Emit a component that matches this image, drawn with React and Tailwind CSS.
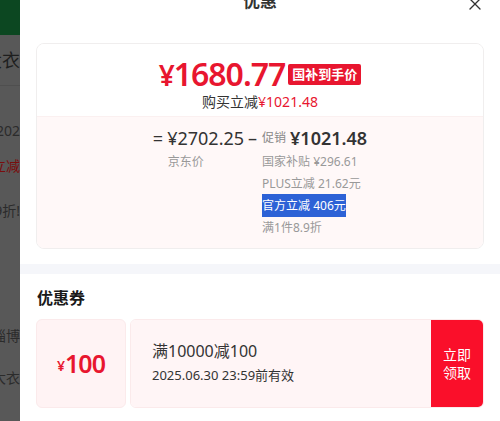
import { X } from "lucide-react";

const font = "font-['Noto_Sans','Noto_Sans_CJK_SC',sans-serif]";

function BackdropStrip() {
  return (
    <div className="w-[20px] shrink-0 overflow-hidden bg-[#585858] flex flex-col">
      <div className="h-[35px] shrink-0 bg-[#0c4721]" />
      <div className="h-[50px] flex justify-end items-center">
        <span className="shrink-0 whitespace-nowrap text-[18px] text-[#1e1e1e]">大衣</span>
      </div>
      <div className="h-[30px] border-t border-[#4f4f4f]" />
      <div className="h-[30px] flex justify-end items-center">
        <span className="shrink-0 whitespace-nowrap text-[14px] text-[#2b2b2b]">202</span>
      </div>
      <div className="h-[40px] flex justify-end items-center">
        <span className="shrink-0 whitespace-nowrap text-[14px] text-[#7a0d0d]">立减</span>
      </div>
      <div className="h-[50px] flex justify-end items-center">
        <span className="shrink-0 whitespace-nowrap text-[14px] text-[#2b2b2b]">9折!</span>
      </div>
      <div className="h-[80px]" />
      <div className="h-[40px] flex justify-end items-center">
        <span className="shrink-0 whitespace-nowrap text-[14px] text-[#2b2b2b]">淄博</span>
      </div>
      <div className="h-[45px] flex justify-end items-center">
        <span className="shrink-0 whitespace-nowrap text-[14px] text-[#2b2b2b]">大衣</span>
      </div>
    </div>
  );
}

function PriceCard() {
  return (
    <div className="mx-[16px] mt-[22px] rounded-[8px] border border-[#f0eeee] overflow-hidden">
      <div className="h-[72px] bg-white flex flex-col items-center pt-[15px]">
        <div className="flex items-center gap-[3px] h-[30px]">
          <span className="text-[#e8162f] text-[32px] leading-none font-semibold tracking-[-1px]">
            <span className="text-[28px]">¥</span>1680.77
          </span>
          <span className="bg-[#e8162f] text-white text-[13px] leading-[21px] font-bold px-[4px] rounded-[2px]">
            国补到手价
          </span>
        </div>
        <div className="mt-[4px] text-[14px] leading-[18px] text-[#333]">
          购买立减<span className="text-[#e8162f]">¥1021.48</span>
        </div>
      </div>
      <div className="h-[132px] bg-[#fff8f8] border-t border-[#fbf0f0] flex justify-center gap-[5px] pt-[10px]">
        <div className="flex flex-col">
          <div className="h-[22px] flex items-center text-[#333] text-[18px] whitespace-nowrap">
            <span className="mr-[4px]">=</span>
            <span>¥2702.25</span>
            <span className="ml-[4px]">–</span>
          </div>
          <div className="pl-[15px] mt-[2px] text-[12px] leading-[22px] text-[#999]">京东价</div>
        </div>
        <div className="flex flex-col">
          <div className="h-[22px] flex items-center whitespace-nowrap">
            <span className="text-[12px] text-[#888] mr-[4px]">促销</span>
            <span className="text-[18px] text-[#333] font-semibold">¥1021.48</span>
          </div>
          <div className="mt-[2px] flex flex-col text-[12px] leading-[22px] text-[#999] whitespace-nowrap">
            <span>国家补贴 ¥296.61</span>
            <span>PLUS立减 21.62元</span>
            <span>
              <span className="bg-[#2d62d6] text-white py-[3px]">官方立减 406元</span>
            </span>
            <span>满1件8.9折</span>
          </div>
        </div>
      </div>
    </div>
  );
}

function Coupon() {
  return (
    <div className="mx-[16px] mt-[11px] h-[89px] flex gap-[4px]">
      <div className="w-[90px] rounded-[6px] bg-[#fff3f4] border border-[#fbeaeb] flex items-center justify-center text-[#e8162f]">
        <span className="text-[14px] font-semibold mt-[4px]">¥</span>
        <span className="text-[25px] font-semibold leading-none tracking-[-1px]">100</span>
      </div>
      <div className="flex-1 flex rounded-[6px] overflow-hidden border border-[#fbeaeb]">
        <div className="flex-1 bg-[#fff5f6] flex flex-col justify-center pl-[21px] pb-[2px] text-[#333]">
          <div className="text-[16px] leading-[24px]">满10000减100</div>
          <div className="text-[13px] leading-[24px]">2025.06.30 23:59前有效</div>
        </div>
        <div className="w-[52px] bg-[#fa0f2a] flex flex-col items-center justify-center text-white text-[14px] leading-[18px]">
          <span>立即</span>
          <span>领取</span>
        </div>
      </div>
    </div>
  );
}

export default function App() {
  return (
    <div className={`flex h-[421px] w-[500px] overflow-hidden ${font}`}>
      <BackdropStrip />
      <div className="flex-1 bg-white flex flex-col">
        <div className="relative h-[40px] -mt-[19px] shrink-0 flex items-center justify-center">
          <span className="text-[17px] font-bold text-[#333]">优惠</span>
          <X className="absolute right-[15px] top-[13px] w-[20px] h-[20px] text-[#333]" strokeWidth={1.6} />
        </div>
        <PriceCard />
        <div className="h-[10px] mt-[15px] bg-[#f5f6fa]" />
        <div className="px-[17px] mt-[14px] text-[16px] leading-[20px] font-bold text-[#1a1a1a]">优惠券</div>
        <Coupon />
      </div>
    </div>
  );
}
